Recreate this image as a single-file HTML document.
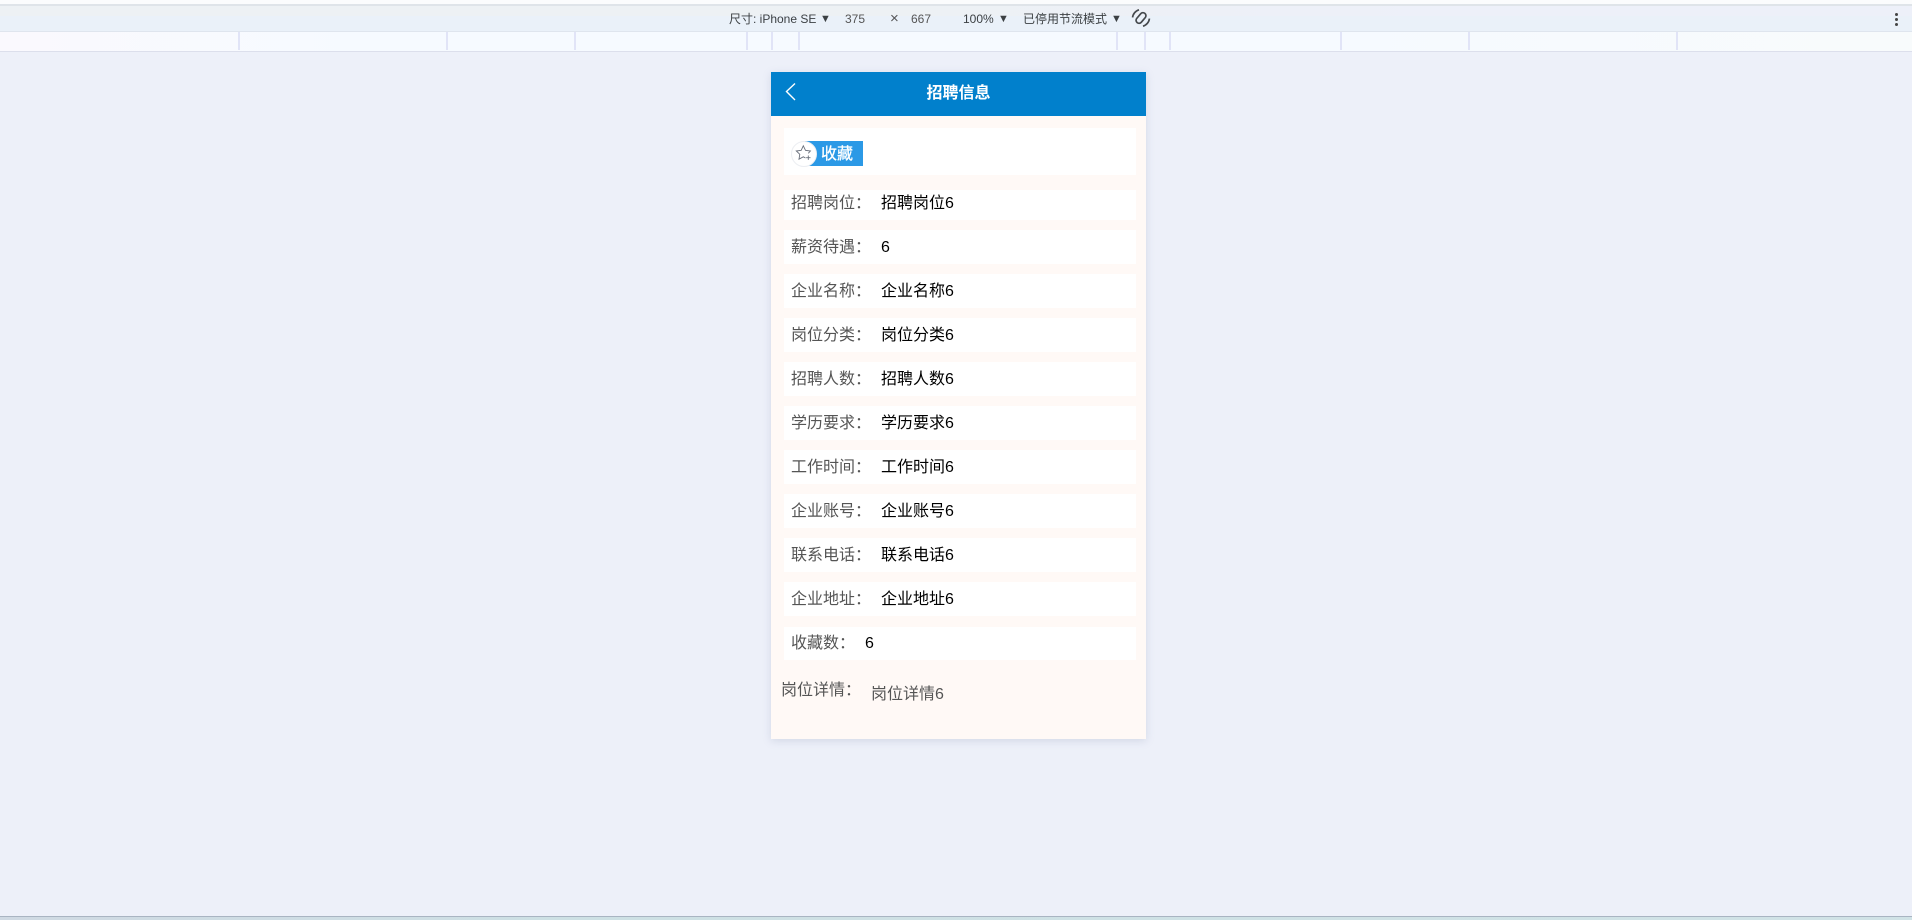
<!DOCTYPE html>
<html lang="zh-CN"><head><meta charset="utf-8"><title>招聘信息</title>
<style>
html,body{margin:0;padding:0;width:1912px;height:920px;overflow:hidden;background:#edf0f9;font-family:"Liberation Sans","Noto Sans CJK SC",sans-serif}
div,span{position:absolute;white-space:nowrap}
.t{font-size:12px;line-height:16px;top:11px;color:#3c4043}
.a{font-size:11px;top:11px}
.tick{top:32px;width:2px;height:18px;background:#e1e4f7}
.row{left:784px;width:352px;height:34px;background:#fff}
.l{left:791px;font-size:16px;line-height:24px;color:#555}
.v{font-size:16px;line-height:24px;color:#000}
</style></head><body>
<div style="left:0;top:0;width:1912px;height:4px;background:#fbfcfd"></div>
<div style="left:0;top:4px;width:1912px;height:1.5px;background:#dfe4e9"></div>
<div style="left:0;top:6px;width:1912px;height:10px;background:linear-gradient(90deg,#edf1f4 0,#edf1f4 45%,#edf0f9 75%)"></div>
<div style="left:0;top:16px;width:1912px;height:15px;background:#eaf1f9"></div>
<div style="left:0;top:31px;width:1912px;height:1px;background:#dfe5ee"></div>
<div style="left:0;top:32px;width:1912px;height:19px;background:linear-gradient(90deg,#faf9fe 0,#f6faff 20%,#f6faff 70%,#f8fbfc 100%)"></div>
<div style="left:0;top:51px;width:1912px;height:1px;background:#dcdfec"></div>
<div class="tick" style="left:238px"></div><div class="tick" style="left:446px"></div><div class="tick" style="left:574px"></div><div class="tick" style="left:746px"></div><div class="tick" style="left:771px"></div><div class="tick" style="left:798px"></div><div class="tick" style="left:1116px"></div><div class="tick" style="left:1144px"></div><div class="tick" style="left:1169px"></div><div class="tick" style="left:1340px"></div><div class="tick" style="left:1468px"></div><div class="tick" style="left:1676px"></div>
<span class="t" style="left:729px">尺寸: iPhone SE</span>
<span class="t a" style="left:820px">▼</span>
<span class="t" style="left:845px;color:#555">375</span>
<span class="t" style="left:890px;color:#555;font-size:15px">×</span>
<span class="t" style="left:911px;color:#555">667</span>
<span class="t" style="left:963px">100%</span>
<span class="t a" style="left:998px">▼</span>
<span class="t" style="left:1023px">已停用节流模式</span>
<span class="t a" style="left:1111px">▼</span>
<svg style="position:absolute;left:1131px;top:8px" width="20" height="20" viewBox="0 0 20 20" fill="none" stroke="#45494d" stroke-width="1.7"><g transform="rotate(40 10 10)"><rect x="7" y="4" width="6" height="12" rx="3"/><path d="M3.200 5a9 9 0 0 0 0 10M16.800 5a9 9 0 0 1 0 10"/></g></svg>
<div style="left:1894.500px;top:13px;width:3px;height:3px;border-radius:50%;background:#444"></div>
<div style="left:1894.500px;top:18px;width:3px;height:3px;border-radius:50%;background:#444"></div>
<div style="left:1894.500px;top:23px;width:3px;height:3px;border-radius:50%;background:#444"></div>

<div style="left:771px;top:72px;width:375px;height:667px;background:#fff9f6;box-shadow:0 2px 8px rgba(120,130,170,.22)"></div>
<div style="left:771px;top:72px;width:375px;height:44px;background:#0180cc"></div>
<svg style="position:absolute;left:784px;top:82px" width="14" height="20" viewBox="0 0 14 20" fill="none" stroke="#fff" stroke-width="1.400"><path d="M11 1.500 2.500 9.500 11 18"/></svg>
<span style="left:771px;width:375px;text-align:center;top:81.500px;font-size:16px;line-height:24px;font-weight:700;color:#fff">招聘信息</span>

<div class="row" style="top:128px;height:47px"></div>
<div style="left:805px;top:141px;width:58px;height:25px;background:#2b99e6"></div>
<div style="left:790.500px;top:140.500px;width:24px;height:24px;border-radius:50%;background:#fff;border:1px solid #eceef2"></div>
<svg style="position:absolute;left:795px;top:144px" width="18" height="18" viewBox="0 0 18 18" fill="none" stroke="#6a707c" stroke-width=".9"><path d="M10.500 14 8.300 12.800 4 15.200 4.800 10.300 1.300 7 6.200 6.300 8.300 1.800 10.500 6.300 15.400 7 13.300 9.300M13.300 11.500v4.400M11.100 13.700h4.400"/></svg>
<span style="left:821px;top:142px;font-size:16px;line-height:25px;color:#fff;-webkit-text-stroke:.3px #fff">收藏</span>

<div class="row" style="top:190px;height:30px"></div><span class="l" style="top:192px">招聘岗位：</span><span class="v" style="left:881px;top:192px">招聘岗位6</span>
<div class="row" style="top:230px"></div><span class="l" style="top:236px">薪资待遇：</span><span class="v" style="left:881px;top:236px">6</span>
<div class="row" style="top:274px"></div><span class="l" style="top:280px">企业名称：</span><span class="v" style="left:881px;top:280px">企业名称6</span>
<div class="row" style="top:318px"></div><span class="l" style="top:324px">岗位分类：</span><span class="v" style="left:881px;top:324px">岗位分类6</span>
<div class="row" style="top:362px"></div><span class="l" style="top:368px">招聘人数：</span><span class="v" style="left:881px;top:368px">招聘人数6</span>
<div class="row" style="top:406px"></div><span class="l" style="top:412px">学历要求：</span><span class="v" style="left:881px;top:412px">学历要求6</span>
<div class="row" style="top:450px"></div><span class="l" style="top:456px">工作时间：</span><span class="v" style="left:881px;top:456px">工作时间6</span>
<div class="row" style="top:494px"></div><span class="l" style="top:500px">企业账号：</span><span class="v" style="left:881px;top:500px">企业账号6</span>
<div class="row" style="top:538px"></div><span class="l" style="top:544px">联系电话：</span><span class="v" style="left:881px;top:544px">联系电话6</span>
<div class="row" style="top:582px"></div><span class="l" style="top:588px">企业地址：</span><span class="v" style="left:881px;top:588px">企业地址6</span>
<div class="row" style="top:627px;height:33px"></div><span class="l" style="top:632px">收藏数：</span><span class="v" style="left:865px;top:632px">6</span>
<span class="l" style="left:781px;top:679px">岗位详情：</span>
<span class="l" style="left:871px;top:683px">岗位详情6</span>

<div style="left:0;top:916px;width:1912px;height:1px;background:#a9b4c2"></div>
<div style="left:0;top:917px;width:1912px;height:3px;background:linear-gradient(90deg,#cfd9e3 0,#cde0e4 30%,#d0e2e6 100%)"></div>
</body></html>
